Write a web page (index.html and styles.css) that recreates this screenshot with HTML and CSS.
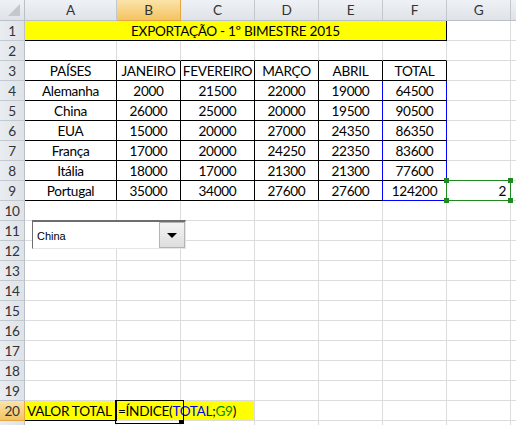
FILE: index.html
```html
<!DOCTYPE html>
<html lang="pt">
<head>
<meta charset="utf-8">
<title>Exportação</title>
<link rel="stylesheet" href="styles.css">
</head>
<body>
<div class="wrap">
  <div class="sheet">
    <div class="corner"><span class="tri"></span></div>
    <div class="ch">A</div><div class="ch sel">B</div><div class="ch">C</div><div class="ch">D</div><div class="ch">E</div><div class="ch">F</div><div class="ch">G</div><div class="ch"></div>

    <div class="rh">1</div><div class="title">EXPORTAÇÃO - 1º BIMESTRE 2015</div><div class="c"></div><div class="c"></div>

    <div class="rh">2</div><div class="c bb"></div><div class="c bb"></div><div class="c bb"></div><div class="c bb"></div><div class="c bb"></div><div class="c bb"></div><div class="c"></div><div class="c"></div>

    <div class="rh">3</div><div class="c tb">PAÍSES</div><div class="c tb">JANEIRO</div><div class="c tb">FEVEREIRO</div><div class="c tb">MARÇO</div><div class="c tb">ABRIL</div><div class="c tb">TOTAL</div><div class="c"></div><div class="c"></div>

    <div class="rh">4</div><div class="c tb">Alemanha</div><div class="c tb">2000</div><div class="c tb">21500</div><div class="c tb">22000</div><div class="c tb br">19000</div><div class="c tf">64500</div><div class="c"></div><div class="c"></div>
    <div class="rh">5</div><div class="c tb">China</div><div class="c tb">26000</div><div class="c tb">25000</div><div class="c tb">20000</div><div class="c tb br">19500</div><div class="c tf">90500</div><div class="c"></div><div class="c"></div>
    <div class="rh">6</div><div class="c tb">EUA</div><div class="c tb">15000</div><div class="c tb">20000</div><div class="c tb">27000</div><div class="c tb br">24350</div><div class="c tf">86350</div><div class="c"></div><div class="c"></div>
    <div class="rh">7</div><div class="c tb">França</div><div class="c tb">17000</div><div class="c tb">20000</div><div class="c tb">24250</div><div class="c tb br">22350</div><div class="c tf">83600</div><div class="c"></div><div class="c"></div>
    <div class="rh">8</div><div class="c tb">Itália</div><div class="c tb">18000</div><div class="c tb">17000</div><div class="c tb">21300</div><div class="c tb br">21300</div><div class="c tf">77600</div><div class="c"></div><div class="c"></div>
    <div class="rh">9</div><div class="c tb">Portugal</div><div class="c tb">35000</div><div class="c tb">34000</div><div class="c tb">27600</div><div class="c tb br">27600</div><div class="c tf blb">124200</div><div class="c num">2</div><div class="c"></div>

    <div class="rh">10</div><div class="c"></div><div class="c"></div><div class="c"></div><div class="c"></div><div class="c"></div><div class="c"></div><div class="c"></div><div class="c"></div>
    <div class="rh">11</div><div class="c"></div><div class="c"></div><div class="c"></div><div class="c"></div><div class="c"></div><div class="c"></div><div class="c"></div><div class="c"></div>
    <div class="rh">12</div><div class="c"></div><div class="c"></div><div class="c"></div><div class="c"></div><div class="c"></div><div class="c"></div><div class="c"></div><div class="c"></div>
    <div class="rh">13</div><div class="c"></div><div class="c"></div><div class="c"></div><div class="c"></div><div class="c"></div><div class="c"></div><div class="c"></div><div class="c"></div>
    <div class="rh">14</div><div class="c"></div><div class="c"></div><div class="c"></div><div class="c"></div><div class="c"></div><div class="c"></div><div class="c"></div><div class="c"></div>
    <div class="rh">15</div><div class="c"></div><div class="c"></div><div class="c"></div><div class="c"></div><div class="c"></div><div class="c"></div><div class="c"></div><div class="c"></div>
    <div class="rh">16</div><div class="c"></div><div class="c"></div><div class="c"></div><div class="c"></div><div class="c"></div><div class="c"></div><div class="c"></div><div class="c"></div>
    <div class="rh">17</div><div class="c"></div><div class="c"></div><div class="c"></div><div class="c"></div><div class="c"></div><div class="c"></div><div class="c"></div><div class="c"></div>
    <div class="rh">18</div><div class="c"></div><div class="c"></div><div class="c"></div><div class="c"></div><div class="c"></div><div class="c"></div><div class="c"></div><div class="c"></div>
    <div class="rh">19</div><div class="c"></div><div class="c"></div><div class="c"></div><div class="c"></div><div class="c"></div><div class="c"></div><div class="c"></div><div class="c"></div>

    <div class="rh sel">20</div><div class="c val">VALOR TOTAL</div><div class="c edit">=ÍNDICE(<span class="ref-b">TOTAL</span>;<span class="ref-g">G9</span>)</div><div class="c"></div><div class="c"></div><div class="c"></div><div class="c"></div><div class="c"></div>

    <div class="rh"></div><div class="c"></div><div class="c"></div><div class="c"></div><div class="c"></div><div class="c"></div><div class="c"></div><div class="c"></div><div class="c"></div>
  </div>

  <div class="combo">
    <span class="combo-text">China</span>
    <span class="combo-btn"><span class="arrow"></span></span>
  </div>

  <div class="gsel">
    <span class="hd tl"></span><span class="hd tr"></span><span class="hd bl"></span><span class="hd br2"></span>
  </div>
</div>
</body>
</html>
```

FILE: styles.css
```css
* {
  box-sizing: border-box;
}

html, body {
  margin: 0;
  padding: 0;
  background: #ffffff;
}

body {
  width: 516px;
  height: 425px;
  overflow: hidden;
}

.wrap {
  position: relative;
  width: 516px;
  height: 425px;
  overflow: hidden;
}

.sheet {
  display: grid;
  grid-template-columns: 25px 92px 64px 74px 64px 64px 64px 64px 64px;
  grid-template-rows: 21px repeat(21, 20px);
  width: 580px;
  font-family: Lato, "Liberation Sans", sans-serif;
  font-size: 13.6px;
  letter-spacing: -0.3px;
  color: #000;
}

.sheet > div {
  white-space: nowrap;
  text-align: center;
  line-height: 19px;
  padding-top: 1px;
  overflow: visible;
}

/* headers */
.corner {
  background: linear-gradient(#eef1f5, #dfe3e8);
  border-right: 1px solid #b9c0c8;
  border-bottom: 1px solid #b9c0c8;
  position: relative;
}

.tri {
  position: absolute;
  right: 4px;
  bottom: 4px;
  width: 0;
  height: 0;
  border-style: solid;
  border-width: 0 0 12px 12px;
  border-color: transparent transparent #c4c8cd transparent;
}

.ch {
  background: linear-gradient(#eef1f5, #dfe3e8);
  border-right: 1px solid #c2c8cf;
  border-bottom: 1px solid #b9c0c8;
  color: #333;
}

.rh {
  background: linear-gradient(90deg, #e9ecf0, #dfe3e8);
  border-right: 1px solid #b9c0c8;
  border-bottom: 1px solid #c2c8cf;
  color: #333;
}

.ch.sel {
  background: linear-gradient(#fbe3a9, #f3c462);
  border-right: 1px solid #e9a542;
  border-bottom: 1px solid #e9a542;
}

.rh.sel {
  background: linear-gradient(#fbe3a9, #f3c462);
  border-right: 1px solid #e9a542;
  border-bottom: 1px solid #e9a542;
}

/* cells */
.c {
  border-right: 1px solid #dadcdd;
  border-bottom: 1px solid #dadcdd;
}

.title {
  grid-column: span 6;
  background: #ffff00;
  border-right: 1px solid #000;
  border-bottom: 1px solid #000;
}

.bb {
  border-bottom-color: #000;
}

.tb {
  border-right-color: #000;
  border-bottom-color: #000;
}

.tb.br {
  border-right-color: #0000ff;
}

.tf {
  border-right-color: #0000ff;
  border-bottom-color: #000;
}

.tf.blb {
  border-bottom-color: #0000ff;
}

.num {
  text-align: right !important;
  padding-right: 4px;
}

.val {
  background: #ffff00;
  border-right-color: #000;
  border-bottom-color: #000;
  text-align: left !important;
  padding-left: 2px;
}

.edit {
  grid-column: span 2;
  background: #ffff00;
  text-align: left !important;
  padding-left: 1px;
  position: relative;
}

.edit::after {
  content: "";
  position: absolute;
  left: -2px;
  top: -1px;
  width: 67px;
  height: 22px;
  border: 1px solid #000;
}

.edit::before {
  content: "";
  position: absolute;
  left: 62px;
  top: 19px;
  width: 4px;
  height: 4px;
  background: #000;
}

.ref-b {
  color: #0000ff;
}

.ref-g {
  color: #0a8a0a;
}

/* combo box (form control) */
.combo {
  position: absolute;
  left: 32px;
  top: 220px;
  width: 154px;
  height: 29px;
  background: #fff;
  border-top: 2px solid #6e6e6e;
  border-left: 1px solid #6e6e6e;
  border-right: 1px solid #e6e6e6;
  border-bottom: 1px solid #e6e6e6;
  display: flex;
  align-items: center;
  justify-content: space-between;
  font-family: "Liberation Sans", sans-serif;
  font-size: 11px;
  color: #000;
}

.combo-text {
  padding-left: 4px;
  padding-top: 2px;
}

.combo-btn {
  width: 26px;
  height: 26px;
  border: 1px solid #b4b4b4;
  background: linear-gradient(#f4f4f4, #dedede);
  display: flex;
  align-items: center;
  justify-content: center;
}

.arrow {
  width: 0;
  height: 0;
  border-left: 5px solid transparent;
  border-right: 5px solid transparent;
  border-top: 5px solid #000;
}

/* G9 reference highlight */
.gsel {
  position: absolute;
  left: 446px;
  top: 180px;
  width: 65px;
  height: 21px;
  border: 1px solid #1f8a1f;
}

.hd {
  position: absolute;
  width: 5px;
  height: 5px;
  background: #1f8a1f;
}

.hd.tl { left: -3px; top: -3px; }
.hd.tr { right: -3px; top: -3px; }
.hd.bl { left: -3px; bottom: -3px; }
.hd.br2 { right: -3px; bottom: -3px; }
```
